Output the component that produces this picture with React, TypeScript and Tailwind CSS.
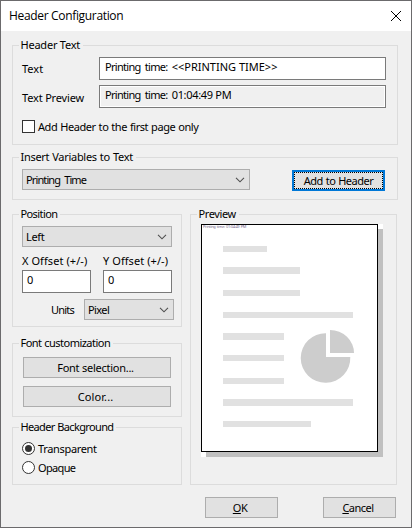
import { useState } from "react";
import type { ReactNode } from "react";
import { clsx } from "clsx";

interface GroupProps {
  title: string;
  titleClass?: string;
  className?: string;
  children: ReactNode;
}

function Group({ title, titleClass, className, children }: GroupProps) {
  return (
    <section className={clsx("border border-[#dcdcdc]", className)}>
      <h2
        className={clsx(
          "-mt-[9px] ml-1.5 h-4 w-fit bg-[#f0f0f0] pl-[1.5px] pr-[3px] leading-4",
          titleClass,
        )}
      >
        {title}
      </h2>
      {children}
    </section>
  );
}

interface ButtonProps {
  className?: string;
  children: ReactNode;
}

function Button({ className, children }: ButtonProps) {
  return (
    <button
      type="button"
      className={clsx(
        "flex h-[21px] items-center justify-center border border-[#adadad] bg-[#e1e1e1]",
        className,
      )}
    >
      {children}
    </button>
  );
}

function Select({ className, children }: ButtonProps) {
  return (
    <button
      type="button"
      className={clsx(
        "flex h-[21px] items-center justify-between border border-[#adadad] bg-[#e1e1e1] pl-[3px] pr-1",
        className,
      )}
    >
      <span>{children}</span>
      <svg width="10" height="6" viewBox="0 0 10 6" fill="none">
        <path d="M1 0.8L5 4.8L9 0.8" stroke="#505050" strokeWidth="1.1" />
      </svg>
    </button>
  );
}

interface RadioProps {
  label: string;
  labelClass?: string;
  checked: boolean;
  onSelect: () => void;
}

function Radio({ label, labelClass, checked, onSelect }: RadioProps) {
  return (
    <button
      type="button"
      role="radio"
      aria-checked={checked}
      onClick={onSelect}
      className="flex h-[13px] items-center gap-[3px]"
    >
      <svg width="13" height="13" viewBox="0 0 13 13">
        <circle cx="6.5" cy="6.5" r="6" fill="#fff" stroke="#333" />
        {checked && <circle cx="6.5" cy="6.5" r="3.5" fill="#333" />}
      </svg>
      <span className={labelClass}>{label}</span>
    </button>
  );
}

function PagePreview() {
  return (
    <div className="ml-2.5 mt-0.5 h-[233px] w-[182px] bg-[linear-gradient(#fff,#fff),linear-gradient(#fff,#fff),linear-gradient(#c0c0c0,#c0c0c0)] bg-[size:5px_5px,5px_5px,100%_100%] bg-[position:100%_0,0_100%,0_0] bg-no-repeat">
      <div className="h-[228px] w-[177px] overflow-hidden border border-black bg-white">
        <p className="h-[5px] whitespace-nowrap pl-px text-[4px] leading-[4px] tracking-[-0.32px] [word-spacing:0.6px] text-[#75688c]">
          Printing time: 01:04:49 PM
        </p>
        <svg width="175" height="221" viewBox="202 230 175 221" className="block">
          <g fill="#e1e1e1" shapeRendering="crispEdges">
            <rect x="223" y="246" width="44" height="6" />
            <rect x="223" y="267" width="77" height="7" />
            <rect x="223" y="290" width="77" height="6" />
            <rect x="223" y="312" width="130" height="6" />
            <rect x="223" y="333" width="61" height="7" />
            <rect x="223" y="355" width="61" height="6" />
            <rect x="223" y="378" width="61" height="6" />
            <rect x="223" y="399" width="130" height="7" />
            <rect x="223" y="421" width="88" height="6" />
          </g>
          <g fill="#cdcdcd">
            <path d="M326 357V333.2A24.8 24.8 0 1 0 350.3 357Z" />
            <path d="M330 353V330A24 23 0 0 1 354 353Z" />
          </g>
        </svg>
      </div>
    </div>
  );
}

export default function App() {
  const [background, setBackground] = useState<string>("transparent");
  const [firstPageOnly, setFirstPageOnly] = useState<boolean>(false);

  return (
    <div className="flex h-[528px] w-[412px] flex-col overflow-hidden border border-[#6b6a6c] bg-[#f0f0f0] font-['Noto_Sans','Open_Sans',sans-serif] text-[11px] leading-4 whitespace-nowrap text-black">
      <header className="flex h-[30px] shrink-0 items-center justify-between bg-white pl-2 pr-2.5">
        <h1 className="font-['Open_Sans',sans-serif] text-xs tracking-[-0.33px]">
          Header Configuration
        </h1>
        <button type="button" aria-label="Close">
          <svg width="10" height="10" viewBox="0 0 10 10">
            <path d="M0 0L10 10M10 0L0 10" stroke="#000" />
          </svg>
        </button>
      </header>

      <main className="px-[11px] pt-3.5">
        <Group title="Header Text" titleClass="tracking-[-0.22px]" className="h-[100px] w-[386px]">
          <div className="mt-1 flex h-[23px] items-center pl-[9px]">
            <span className="w-[77px]">Text</span>
            <div className="h-[23px] w-[287px] border border-[#7a7a7a] bg-white pl-[5px] pt-px">
              <span className="tracking-[-0.7px] [word-spacing:2px]">Printing time: </span>
              <span>&lt;&lt;PRINTING TIME&gt;&gt;</span>
            </div>
          </div>
          <div className="mt-[5px] flex h-[23px] items-center pl-[9px]">
            <span className="w-[77px] pt-0.5 tracking-[-0.17px]">Text Preview</span>
            <div className="h-[23px] w-[287px] border border-[#7a7a7a] bg-white p-px">
              <div className="h-full bg-[#f0f0f0] pl-1">
                <span className="tracking-[-0.7px] [word-spacing:2px]">Printing time: </span>
                <span className="tracking-[-0.32px]">01:04:49 PM</span>
              </div>
            </div>
          </div>
          <button
            type="button"
            role="checkbox"
            aria-checked={firstPageOnly}
            onClick={() => setFirstPageOnly(!firstPageOnly)}
            className="ml-[9px] mt-3 flex h-[13px] items-center gap-[3px]"
          >
            <span className="h-[13px] w-[13px] border border-[#333] bg-white text-[10px] leading-[11px]">
              {firstPageOnly && "✓"}
            </span>
            <span className="tracking-[-0.43px] [word-spacing:0.5px]">
              Add Header to the first page only
            </span>
          </button>
        </Group>

        <Group
          title="Insert Variables to Text"
          titleClass="tracking-[-0.3px] [word-spacing:0.5px]"
          className="mt-3 h-[43px] w-[386px]"
        >
          <div className="mt-1 flex justify-between pl-[9px] pr-3">
            <Select className="w-[228px] tracking-[-0.88px] [word-spacing:2px]">
              Printing Time
            </Select>
            <button
              type="button"
              className="mt-px h-[21px] w-[93px] border-2 border-[#0078d7] bg-[#e1e1e1]"
            >
              <span className="flex h-[17px] items-center justify-center border border-dotted border-black tracking-[-0.5px] [word-spacing:0.5px]">
                Add to Header
              </span>
            </button>
          </div>
        </Group>

        <div className="mt-3.5 flex gap-2">
          <div className="w-[170px]">
            <Group title="Position" titleClass="tracking-[-0.6px]" className="h-[113px]">
              <div className="mt-1 px-[9px]">
                <Select className="w-[150px] tracking-[-0.3px]">Left</Select>
                <div className="flex gap-3">
                  <div className="w-[69px]">
                    <span className="block h-[23px] pt-[6px] tracking-[0.07px]">X Offset (+/-)</span>
                    <div className="h-[23px] border border-[#7a7a7a] bg-white pl-1 pt-px">0</div>
                  </div>
                  <div className="w-[69px]">
                    <span className="block h-[23px] pt-[6px] tracking-[0.07px]">Y Offset (+/-)</span>
                    <div className="h-[23px] border border-[#7a7a7a] bg-white pl-1 pt-px">0</div>
                  </div>
                </div>
                <div className="mt-1.5 flex items-center pl-[29px]">
                  <span className="w-[33px] shrink-0 tracking-[-0.8px]">Units</span>
                  <Select className="w-[90px] shrink-0 tracking-[-0.6px]">Pixel</Select>
                </div>
              </div>
            </Group>

            <Group
              title="Font customization"
              titleClass="tracking-[-0.53px] [word-spacing:0.5px]"
              className="mt-4 h-[74px]"
            >
              <div className="mt-1.5 flex flex-col gap-2 px-2.5">
                <Button className="tracking-[-0.25px] pr-[3px]">Font selection...</Button>
                <Button className="tracking-[0.1px] pr-[3px]">Color...</Button>
              </div>
            </Group>

            <Group
              title="Header Background"
              titleClass="tracking-[-0.65px] [word-spacing:0.5px]"
              className="mt-2.5 h-[58px]"
            >
              <div role="radiogroup" className="mt-[7px] flex flex-col gap-1.5 pl-[9px]">
                <Radio
                  label="Transparent"
                  labelClass="tracking-[-0.33px]"
                  checked={background === "transparent"}
                  onSelect={() => setBackground("transparent")}
                />
                <Radio
                  label="Opaque"
                  labelClass="tracking-[-0.65px]"
                  checked={background === "opaque"}
                  onSelect={() => setBackground("opaque")}
                />
              </div>
            </Group>
          </div>

          <Group
            title="Preview"
            titleClass="tracking-[-0.4px]"
            className="h-[271px] w-[207px]"
          >
            <PagePreview />
          </Group>
        </div>

        <footer className="mt-3 flex justify-end gap-[45px] pr-1">
          <Button className="w-[73px] pr-[3px] tracking-[-0.5px]">
            <span>
              <u>O</u>K
            </span>
          </Button>
          <Button className="w-[73px] pr-[3px] tracking-[-0.5px]">
            <span>
              <u>C</u>ancel
            </span>
          </Button>
        </footer>
      </main>
    </div>
  );
}
